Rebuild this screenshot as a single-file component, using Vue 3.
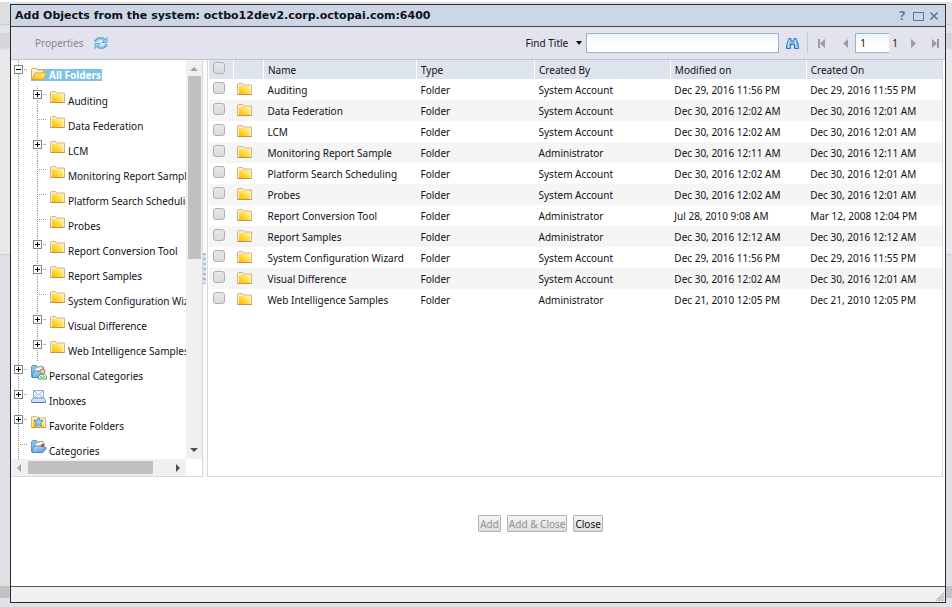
<script setup>
import { ref } from 'vue'

const tree = [
  { name: 'All Folders', level: 0, mark: 'minus', icon: 'open', selected: true },
  { name: 'Auditing', level: 1, mark: 'plus', icon: 'folder' },
  { name: 'Data Federation', level: 1, icon: 'folder' },
  { name: 'LCM', level: 1, mark: 'plus', icon: 'folder' },
  { name: 'Monitoring Report Sample', level: 1, icon: 'folder' },
  { name: 'Platform Search Scheduling', level: 1, icon: 'folder' },
  { name: 'Probes', level: 1, icon: 'folder' },
  { name: 'Report Conversion Tool', level: 1, mark: 'plus', icon: 'folder' },
  { name: 'Report Samples', level: 1, mark: 'plus', icon: 'folder' },
  { name: 'System Configuration Wizard', level: 1, icon: 'folder' },
  { name: 'Visual Difference', level: 1, mark: 'plus', icon: 'folder' },
  { name: 'Web Intelligence Samples', level: 1, mark: 'plus', icon: 'folder' },
  { name: 'Personal Categories', level: 0, mark: 'plus', icon: 'personal' },
  { name: 'Inboxes', level: 0, mark: 'plus', icon: 'inbox' },
  { name: 'Favorite Folders', level: 0, mark: 'plus', icon: 'favorite' },
  { name: 'Categories', level: 0, icon: 'category' }
]

const rows = [
  ['Auditing', 'System Account', 'Dec 29, 2016 11:56 PM', 'Dec 29, 2016 11:55 PM'],
  ['Data Federation', 'System Account', 'Dec 30, 2016 12:02 AM', 'Dec 30, 2016 12:01 AM'],
  ['LCM', 'System Account', 'Dec 30, 2016 12:02 AM', 'Dec 30, 2016 12:01 AM'],
  ['Monitoring Report Sample', 'Administrator', 'Dec 30, 2016 12:11 AM', 'Dec 30, 2016 12:11 AM'],
  ['Platform Search Scheduling', 'System Account', 'Dec 30, 2016 12:02 AM', 'Dec 30, 2016 12:01 AM'],
  ['Probes', 'System Account', 'Dec 30, 2016 12:02 AM', 'Dec 30, 2016 12:01 AM'],
  ['Report Conversion Tool', 'Administrator', 'Jul 28, 2010 9:08 AM', 'Mar 12, 2008 12:04 PM'],
  ['Report Samples', 'Administrator', 'Dec 30, 2016 12:12 AM', 'Dec 30, 2016 12:12 AM'],
  ['System Configuration Wizard', 'System Account', 'Dec 29, 2016 11:56 PM', 'Dec 29, 2016 11:55 PM'],
  ['Visual Difference', 'System Account', 'Dec 30, 2016 12:02 AM', 'Dec 30, 2016 12:01 AM'],
  ['Web Intelligence Samples', 'Administrator', 'Dec 21, 2010 12:05 PM', 'Dec 21, 2010 12:05 PM']
]

const search = ref('')
const page = ref('1')
</script>

<template>
  <div class="page">
    <svg class="defs" aria-hidden="true">
      <defs>
        <linearGradient id="gold" x1="0" y1="1" x2="1" y2="0">
          <stop offset="0" stop-color="#fbb900" />
          <stop offset=".5" stop-color="#ffdc3f" />
          <stop offset="1" stop-color="#fff6ae" />
        </linearGradient>
        <linearGradient id="blue" x1="0" y1="0" x2="1" y2="1">
          <stop offset="0" stop-color="#c4e2fa" />
          <stop offset="1" stop-color="#4e92d6" />
        </linearGradient>
        <symbol id="folder" viewBox="0 0 16 16">
          <path d="M.5 13.500V3l1-.500h4L6.500 4h8v9.500z" fill="#fbeed0" stroke="#dcb27c" />
          <path d="M.5 13.500h14" stroke="#c98f4c" />
          <rect x="2" y="5" width="11" height="8" fill="url(#gold)" />
        </symbol>
        <symbol id="open" viewBox="0 0 16 16">
          <path d="M.5 13V3.500l1-1h4L6.500 4h6v3" fill="#fbeed0" stroke="#dba656" />
          <path d="M1 13.500L4 7h11.500L12 13.500z" fill="url(#gold)" stroke="#dfa23a" />
        </symbol>
        <symbol id="category" viewBox="0 0 16 16">
          <path d="M.5 13V2.500l1-1h4l1 1.500h6v3" fill="#86bdec" stroke="#5c9bd5" />
          <path d="M3 5l8-3 3 4-8 3z" fill="#f2fafe" stroke="#6fa8dc" />
          <path d="M5 3l4-1 1 1-4 1z" fill="#b5d92f" />
          <path d="M1 13.500L3 7h9l3.500 2-3.500 4.500z" fill="url(#blue)" stroke="#4c8ac8" />
          <path d="M10 5h3v3h-3z" fill="#ee3a3a" />
        </symbol>
        <symbol id="personal" viewBox="0 0 16 16">
          <path d="M.5 13V2.500l1-1h4l1 1.500h6v3" fill="#86bdec" stroke="#5c9bd5" />
          <path d="M3 5l7-3 3 4-8 3z" fill="#f2fafe" stroke="#6fa8dc" />
          <path d="M4 3l4-1 1 1-4 1z" fill="#b5d92f" />
          <path d="M1 13.500L3 7h9l-1 6.500z" fill="url(#blue)" stroke="#4c8ac8" />
          <circle cx="11.500" cy="7.500" r="2.500" fill="#f6c9a0" stroke="#c0713c" />
          <path d="M7.500 15v-3l2-1.500h4l2 1.500v3z" fill="#d8f3dc" stroke="#4fae76" />
          <path d="M9 12l2.500 2L14 12" fill="none" stroke="#4fae76" />
        </symbol>
        <symbol id="inbox" viewBox="0 0 16 16">
          <path d="M2.500 1.500h10v8h-10z" fill="#f3f8fe" stroke="#8eb2e0" />
          <path d="M3 2l4.500 4L12 2M3 9l3.500-3.500M12 9L8.500 5.500" fill="none" stroke="#8eb2e0" />
          <path d="M.5 11l2-2h10l2 2v2.500H.5z" fill="#cfe0f6" stroke="#6d95cf" />
          <path d="M1 13.500h13" stroke="#4a76b8" />
        </symbol>
        <symbol id="favorite" viewBox="0 0 16 16">
          <use href="#folder" />
          <path d="M7.500 3.500l1.300 2.900 3.200.3-2.400 2.200.7 3.100-2.800-1.600-2.800 1.600.7-3.100L3 6.700l3.200-.3z" fill="#8fd0ff" stroke="#3a86d0" stroke-width=".8" />
        </symbol>
      </defs>
    </svg>

    <section class="dialog" role="dialog" aria-labelledby="dialog-title">
      <header class="titlebar">
        <h1 id="dialog-title">Add Objects from the system: octbo12dev2.corp.octopai.com:6400</h1>
        <div class="controls">
          <button class="bare help" aria-label="Help">?</button>
          <button class="bare" aria-label="Maximize">
            <svg width="11" height="10"><path d="M.5 1.500h10v8H.5zM0 1.500h11" fill="none" stroke="#5d73ab" /></svg>
          </button>
          <button class="bare" aria-label="Close window">
            <svg width="10" height="10"><path d="M1.500 1.500l7 7M8.500 1.500l-7 7" stroke="#5d73ab" stroke-width="1.600" /></svg>
          </button>
        </div>
      </header>

      <div class="toolbar">
        <button class="bare props" disabled>Properties</button>
        <button class="bare" aria-label="Refresh">
          <svg width="14" height="14" viewBox="0 0 14 14">
            <path d="M2 6V4.500L4.500 2.500h4L11 4.500M12 8v1.500L9.500 11.500h-4L3 9.500" fill="none" stroke="#4f9fd8" stroke-width="2.400" />
            <path d="M2.500 5.500V4.500L5 3h3.500L11 5M11.500 8.500v1L9 11H5.500L3 9" fill="none" stroke="#c9e9fa" stroke-width=".9" />
            <path d="M13 1.500V6.500H8zM1 12.500V7.500h5z" fill="#9bd2f0" stroke="#4f9fd8" stroke-width=".8" />
          </svg>
        </button>
        <div class="find">
          <button class="bare finder">Find Title
            <svg width="6" height="4"><path d="M0 0h6L3 4z" fill="#111" /></svg>
          </button>
          <input v-model="search" class="search" type="text" aria-label="Find Title" />
          <button class="bare" aria-label="Search">
            <svg width="13" height="13" viewBox="0 0 13 13">
              <path d="M3 1.500h2v2.500h3V1.500h2l2.500 7v3h-4v-4h-4v4h-4v-3z" fill="#7cbbe8" stroke="#2f76bd" />
              <path d="M3.500 3L2 8.500M9 3l1 5.500M2 10h1.500M10 10h1.500" stroke="#d9f0ff" />
            </svg>
          </button>
        </div>
        <nav class="pager" aria-label="Pages">
          <button class="bare" aria-label="First page"><svg width="7" height="9"><path d="M0 0h2v9H0zM7 0v9L2 4.500z" fill="#9a9aa0" /></svg></button>
          <button class="bare prev" aria-label="Previous page"><svg width="5" height="9"><path d="M5 0v9L0 4.500z" fill="#9a9aa0" /></svg></button>
          <input v-model="page" class="pageno" type="text" aria-label="Page number" />
          <span class="total">1</span>
          <button class="bare next" aria-label="Next page"><svg width="5" height="9"><path d="M0 0v9l5-4.500z" fill="#9a9aa0" /></svg></button>
          <button class="bare" aria-label="Last page"><svg width="7" height="9"><path d="M5 0h2v9H5zM0 0v9l5-4.500z" fill="#9a9aa0" /></svg></button>
        </nav>
      </div>

      <main class="body">
        <aside class="side">
          <ul class="tree">
            <li v-for="n in tree" :key="n.name" :class="['node', 'level' + n.level]">
              <button v-if="n.mark" class="mark" :aria-label="'Toggle ' + n.name">
                <svg width="9" height="9"><rect x=".5" y=".5" width="8" height="8" fill="#fff" stroke="#858585" /><path :d="n.mark === 'plus' ? 'M2 4.500h5M4.500 2v5' : 'M2 4.500h5'" stroke="#000" /></svg>
              </button>
              <span v-else class="mark"></span>
              <span class="stub"></span>
              <a href="#" :class="['label', { selected: n.selected }]">
                <svg width="16" height="16"><use :href="'#' + n.icon" /></svg>
                <span>{{ n.name }}</span>
              </a>
            </li>
          </ul>
          <div class="vbar">
            <svg width="8" height="4"><path d="M0 4h8L4 0z" fill="#a3a3a3" /></svg>
            <div class="track"><div class="vthumb"></div></div>
            <svg width="8" height="4"><path d="M0 0h8L4 4z" fill="#505050" /></svg>
          </div>
          <div class="hbar">
            <svg width="4" height="8"><path d="M4 0v8L0 4z" fill="#a3a3a3" /></svg>
            <div class="track"><div class="hthumb"></div></div>
            <svg width="4" height="8"><path d="M0 0v8l4-4z" fill="#505050" /></svg>
          </div>
        </aside>

        <div class="splitter"><i></i></div>

        <div class="list">
          <table>
            <colgroup><col class="c1" /><col class="c2" /><col class="c3" /><col class="c4" /><col /><col /><col /></colgroup>
            <thead>
              <tr>
                <th class="check"><input type="checkbox" aria-label="Select all" /></th>
                <th></th>
                <th>Name</th>
                <th>Type</th>
                <th>Created By</th>
                <th>Modified on</th>
                <th>Created On</th>
              </tr>
            </thead>
            <tbody>
              <tr v-for="r in rows" :key="r[0]">
                <td class="check"><input type="checkbox" :aria-label="'Select ' + r[0]" /></td>
                <td class="pic"><svg width="16" height="16"><use href="#folder" /></svg></td>
                <td>{{ r[0] }}</td>
                <td>Folder</td>
                <td>{{ r[1] }}</td>
                <td>{{ r[2] }}</td>
                <td>{{ r[3] }}</td>
              </tr>
            </tbody>
          </table>
        </div>
      </main>

      <div class="actions">
        <button disabled>Add</button>
        <button disabled>Add &amp; Close</button>
        <button>Close</button>
      </div>

      <footer class="status">
        <svg width="10" height="10"><path d="M1 9l8-8M4 9l5-5M7 9l2-2" stroke="#a8a8a8" stroke-width="1.500" stroke-dasharray="1.500 .5" /></svg>
      </footer>
    </section>
  </div>
</template>

<style>
body {
  background: #fff;
}
</style>

<style scoped>
* {
  box-sizing: border-box;
}
.page {
  min-height: 100vh;
  display: flex;
  padding: 4px 6px 4px 10px;
  background: linear-gradient(#fff 2px, #dedee3 2px, #dedee3 24px, #c3c7d0 24px, #e3e4e8 26px, #e3e4e8 33px, #d3d5da 33px, #d3d5da 48px, #e7e8e9 50px, #e7e8e9 254px, #c5cad6 254px, #e0e0e4 256px, #e0e0e4 586px, #c2c2c4 586px, #c2c2c4 598px, #e3e1e5 598px);
  font-family: "Noto Sans", "Open Sans", sans-serif;
  font-size: 10px;
  line-height: 14px;
  color: #101018;
}
.defs {
  position: absolute;
  width: 0;
  height: 0;
}
button,
input {
  font: inherit;
  color: inherit;
  margin: 0;
}
svg {
  display: block;
  flex: none;
}
.bare {
  display: flex;
  align-items: center;
  padding: 0;
  border: 0;
  background: none;
}
.dialog {
  flex: 1;
  min-width: 0;
  display: flex;
  flex-direction: column;
  border: 1px solid #2b2b30;
  background: #fff;
}
.titlebar {
  display: flex;
  justify-content: space-between;
  height: 22px;
  padding: 0 6px 0 4px;
  align-items: center;
  background: #ccd6e5;
  border-bottom: 1px solid #45474f;
}
h1 {
  margin: 0;
  font-family: "DejaVu Sans", sans-serif;
  font-size: 11px;
  font-weight: 700;
  white-space: nowrap;
}
.controls {
  display: flex;
  gap: 5px;
  color: #5d73ab;
}
.help {
  margin-right: 3px;
  font-size: 12px;
  font-weight: 700;
}
.toolbar {
  display: flex;
  align-items: center;
  height: 33px;
  padding: 0 6px 0 24px;
  gap: 10px;
  background: #e3e3ed;
  border-bottom: 1px solid #c3c3d8;
}
.props {
  color: #85858d;
}
.find {
  display: flex;
  align-items: center;
  gap: 7px;
  margin-left: auto;
  padding-right: 8px;
  border-right: 1px solid #bccbe0;
}
.finder {
  gap: 8px;
  margin-right: -3px;
}
.search,
.pageno {
  height: 20px;
  border: 1px solid #9fb2d3;
  background: linear-gradient(#eaf3fb, #fff 50%);
  padding: 0 4px;
}
.search {
  width: 193px;
}
.pager {
  display: flex;
  align-items: center;
  gap: 16px;
  color: #111;
}
.prev {
  margin-left: 2px;
}
.pageno {
  width: 34px;
  margin-left: -9px;
  border-right: 0;
}
.total {
  margin-left: -13px;
}
.next {
  margin-left: -3px;
}
.body {
  display: flex;
  height: 417px;
}
.side {
  width: 192px;
  display: grid;
  grid-template: minmax(0, 1fr) 17px / minmax(0, 1fr) 16px;
  border-right: 1px solid #d9d9d9;
  border-bottom: 1px solid #d9d9d9;
}
.tree {
  list-style: none;
  margin: 0;
  padding: 1px 0 0 8px;
  overflow: hidden;
  background: repeating-linear-gradient(#9a9a9a 0 1px, transparent 1px 2px) 7px 0 / 1px 100% no-repeat;
}
.node {
  display: flex;
  height: 25px;
  margin-left: -5px;
}
.level1 {
  padding-left: 19px;
  background: repeating-linear-gradient(#9a9a9a 0 1px, transparent 1px 2px) 23px 0 / 1px 100% no-repeat;
}
.mark {
  width: 9px;
  height: 9px;
  margin-top: 4px;
  padding: 0;
  border: 0;
  background: none;
  flex: none;
}
span.mark {
  background: repeating-linear-gradient(90deg, #9a9a9a 0 1px, transparent 1px 2px) 4px 4px / 5px 1px no-repeat;
}
.stub {
  flex: none;
  width: 4px;
  height: 1px;
  margin-top: 8px;
  background: repeating-linear-gradient(90deg, transparent 0 1px, #9a9a9a 1px 2px);
}
.label {
  display: flex;
  align-items: flex-start;
  gap: 2px;
  height: 20px;
  margin: 3px 0 0 4px;
  color: inherit;
  text-decoration: none;
  white-space: nowrap;
}
.label span {
  padding: 5px 3px 0 0;
}
.selected {
  height: 12px;
  margin-top: 8px;
  background: #7cc3e8;
  color: #fff;
  font-weight: 700;
  line-height: 12px;
}
.selected svg {
  margin-top: -3px;
}
.selected span {
  padding: 0 1px 0 0;
}
.vbar,
.hbar {
  display: flex;
  align-items: center;
  justify-content: space-between;
  background: #f0f0f0;
}
.vbar {
  flex-direction: column;
  padding: 7px 0;
}
.hbar {
  padding: 0 6px;
}
.track {
  flex: 1;
}
.vbar .track {
  width: 13px;
  padding-top: 5px;
}
.hbar .track {
  padding-left: 7px;
}
.vthumb {
  height: 183px;
  background: #c1c1c1;
}
.hthumb {
  width: 125px;
  height: 13px;
  background: #c1c1c1;
}
.splitter {
  width: 4px;
  display: flex;
  align-items: center;
  background: #fbfbfb;
}
.splitter i {
  width: 3px;
  height: 31px;
  background: repeating-linear-gradient(#a9bcdc 0 2px, #dbe5f3 2px 5px);
}
.list {
  flex: 1;
  min-width: 0;
  margin-right: 2px;
  border: 1px solid #d9d9d9;
  border-top: 0;
}
table {
  width: 100%;
  table-layout: fixed;
  border-collapse: collapse;
}
.c1 {
  width: 25px;
}
.c2 {
  width: 30px;
}
.c3 {
  width: 153px;
}
.c4 {
  width: 118px;
}
th {
  height: 19px;
  padding: 0 0 0 4px;
  text-align: left;
  font-weight: 400;
  background: #dde4ee;
  border-left: 1px solid #fff;
}
td {
  height: 21px;
  padding: 0 0 0 4px;
  white-space: nowrap;
}
tbody tr:nth-child(even) {
  background: #f5f5f5;
}
th.check {
  vertical-align: top;
  padding-top: 2px;
}
td.check {
  vertical-align: top;
  padding-top: 3px;
}
.pic {
  vertical-align: top;
  padding: 2px 0 0 3px;
}
.check input {
  appearance: none;
  display: block;
  width: 12px;
  height: 12px;
  border: 1px solid #b0b0b0;
  border-radius: 3px;
  background: linear-gradient(#e8e8e8, #dadada);
}
.actions {
  flex: 1;
  display: flex;
  justify-content: center;
  align-items: flex-start;
  gap: 6px;
  padding: 38px 0 0 125px;
}
.actions button {
  height: 17px;
  padding: 0 1px;
  border: 1px solid #b4b4b4;
  border-radius: 1px;
  background: linear-gradient(#f4f4f4, #dedede);
  color: #111;
}
.actions button:disabled {
  color: #929292;
}
.status {
  display: flex;
  justify-content: flex-end;
  align-items: flex-end;
  height: 16px;
  border-top: 1px solid #55555a;
  background: #f0f0f1;
}
</style>
